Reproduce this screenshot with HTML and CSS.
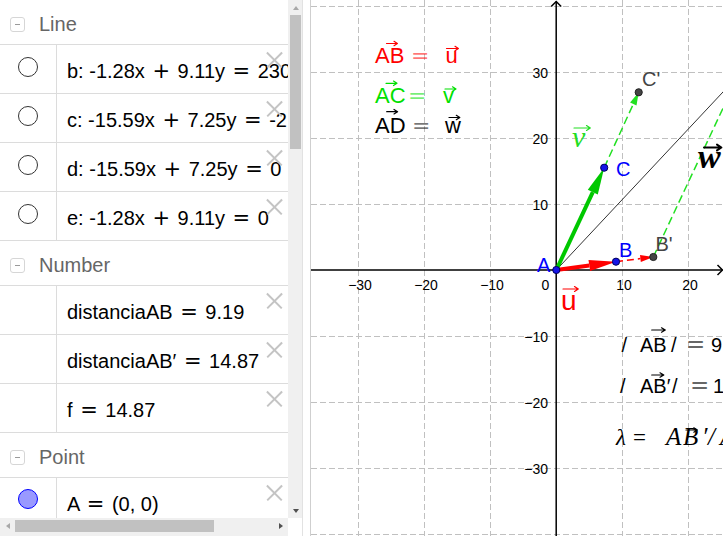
FILE: index.html
```html
<!DOCTYPE html>
<html>
<head>
<meta charset="utf-8">
<link rel="stylesheet" href="styles.css">
</head>
<body>
<div class="app">
  <div class="algebra">
    <div class="av-body">
      <div class="av-list">
        <div class="group-head"><span class="toggle"></span><span class="group-title">Line</span></div>
        <div class="item"><div class="marker"><span class="radio"></span></div><div class="formula">b: -1.28x <span class="op">+</span> 9.11y <span class="op">=</span> 230.29</div><span class="close"></span></div>
        <div class="item"><div class="marker"><span class="radio"></span></div><div class="formula">c: -15.59x <span class="op">+</span> 7.25y <span class="op">=</span> -214.57</div><span class="close"></span></div>
        <div class="item"><div class="marker"><span class="radio"></span></div><div class="formula">d: -15.59x <span class="op">+</span> 7.25y <span class="op">=</span> 0</div><span class="close"></span></div>
        <div class="item"><div class="marker"><span class="radio"></span></div><div class="formula">e: -1.28x <span class="op">+</span> 9.11y <span class="op">=</span> 0</div><span class="close"></span></div>
        <div class="group-head"><span class="toggle"></span><span class="group-title">Number</span></div>
        <div class="item"><div class="marker"></div><div class="formula">distanciaAB <span class="op">=</span> 9.19</div><span class="close"></span></div>
        <div class="item"><div class="marker"></div><div class="formula">distanciaAB′ <span class="op">=</span> 14.87</div><span class="close"></span></div>
        <div class="item"><div class="marker"></div><div class="formula">f <span class="op">=</span> 14.87</div><span class="close"></span></div>
        <div class="group-head"><span class="toggle"></span><span class="group-title">Point</span></div>
        <div class="item"><div class="marker marker-point"><span class="dot"></span></div><div class="formula">A <span class="op">=</span> (0, 0)</div><span class="close"></span></div>
      </div>
      <div class="vscroll">
        <div class="vs-btn"><span class="tri-up"></span></div>
        <div class="vs-thumb"></div>
        <div class="vs-space"></div>
        <div class="vs-btn"><span class="tri-down"></span></div>
      </div>
    </div>
    <div class="hscroll-row">
      <div class="hscroll">
        <div class="hs-btn"><span class="tri-left"></span></div>
        <div class="hs-thumb"></div>
        <div class="hs-space"></div>
        <div class="hs-btn"><span class="tri-right"></span></div>
      </div>
      <div class="corner"></div>
    </div>
  </div>
  <div class="splitter"></div>
  <div class="graphics">
    <svg class="canvas" width="412" height="536" viewBox="311 0 412 536">
      <g class="grid">
        <line x1="358.5" y1="0" x2="358.5" y2="536"/>
        <line x1="424.5" y1="0" x2="424.5" y2="536"/>
        <line x1="490.5" y1="0" x2="490.5" y2="536"/>
        <line x1="622.5" y1="0" x2="622.5" y2="536"/>
        <line x1="688.5" y1="0" x2="688.5" y2="536"/>
        <line x1="311" y1="6.5" x2="725" y2="6.5"/>
        <line x1="311" y1="72.5" x2="725" y2="72.5"/>
        <line x1="311" y1="138.5" x2="725" y2="138.5"/>
        <line x1="311" y1="204.5" x2="725" y2="204.5"/>
        <line x1="311" y1="336.5" x2="725" y2="336.5"/>
        <line x1="311" y1="402.5" x2="725" y2="402.5"/>
        <line x1="311" y1="468.5" x2="725" y2="468.5"/>
        <line x1="311" y1="534.5" x2="725" y2="534.5"/>
      </g>
      <g class="axes">
        <line x1="556.2" y1="1.5" x2="556.2" y2="536"/>
        <line x1="311" y1="270" x2="722.5" y2="270"/>
        <path d="M551.2 6.5 L556.2 1.5 L561.2 6.5"/>
        <path d="M717.5 265 L722.5 270 L717.5 275"/>
      </g>
      <g class="ticks">
        <text x="360" y="289.5" text-anchor="middle">−30</text>
        <text x="426" y="289.5" text-anchor="middle">−20</text>
        <text x="492" y="289.5" text-anchor="middle">−10</text>
        <text x="624" y="289.5" text-anchor="middle">10</text>
        <text x="690" y="289.5" text-anchor="middle">20</text>
        <text x="545.5" y="289.5" text-anchor="middle">0</text>
        <text x="548" y="78" text-anchor="end">30</text>
        <text x="548" y="144" text-anchor="end">20</text>
        <text x="548" y="210" text-anchor="end">10</text>
        <text x="548" y="342" text-anchor="end">−10</text>
        <text x="548" y="408" text-anchor="end">−20</text>
        <text x="548" y="474" text-anchor="end">−30</text>
      </g>
      <line class="thin-line" x1="556.3" y1="270" x2="730" y2="84.5"/>
      <line class="dash-green" x1="653.3" y1="257" x2="730" y2="93.2"/>
      <line class="dash-green" x1="604.2" y1="167.7" x2="633.3" y2="104.1"/>
      <polygon class="fill-green-l" points="638.7,92.3 636.5,105.6 630.1,102.6"/>
      <line class="dash-red" x1="616" y1="261.7" x2="640.4" y2="258.6"/>
      <polygon class="fill-red" points="653.3,257 640.8,262.1 640.0,255.1"/>
      <line class="vec-red" x1="556.3" y1="270" x2="589.3" y2="265.4"/>
      <polygon class="fill-red" points="616,261.7 590.1,270.9 588.5,260.0"/>
      <line class="vec-green" x1="556.3" y1="270" x2="592.8" y2="192.1"/>
      <polygon class="fill-green" points="604.2,167.7 597.8,194.4 587.8,189.8"/>
      <circle class="pt-free" cx="556.3" cy="270" r="3.6"/>
      <circle class="pt-free" cx="616" cy="261.7" r="3.6"/>
      <circle class="pt-free" cx="604.2" cy="167.7" r="3.6"/>
      <circle class="pt-dep" cx="653.3" cy="257" r="3.6"/>
      <circle class="pt-dep" cx="638.7" cy="92.3" r="3.6"/>

      <text class="lbl blue" x="537" y="272">A</text>
      <text class="lbl blue" x="619" y="257">B</text>
      <text class="lbl gray" x="655.5" y="251">B'</text>
      <text class="lbl blue" x="616" y="176">C</text>
      <text class="lbl gray" x="642" y="86">C'</text>

      <text class="ulbl" x="561" y="310">u</text>
      <path class="arr arr-red" d="M563 289 H578 M574.5 286.6 L578.3 289 L574.5 291.4"/>
      <text class="vlbl" x="572" y="147">v</text>
      <path class="arr arr-green" d="M574 128 H590 M586.5 125.6 L590.3 128 L586.5 130.4"/>
      <text class="wlbl" x="698" y="168">w</text>
      <path class="arr arr-black-b" d="M704 147.5 H721 M717 144.6 L721.4 147.5 L717 150.4"/>

      <text class="vt red" x="375" y="63.3">AB</text>
      <path class="arr arr-red" d="M386.5 43.5 H397 M394 41.3 L397.4 43.5 L394 45.7"/>
      <text class="veq red" x="411" y="63.3">=</text>
      <text class="vt red" x="445.5" y="63.3">u</text>
      <path class="arr arr-red" d="M446.5 48.5 H458 M455 46.3 L458.4 48.5 L455 50.7"/>

      <text class="vt green" x="375" y="102.7">AC</text>
      <path class="arr arr-green-t" d="M386 83.3 H396.7 M393.5 81.1 L397 83.3 L393.5 85.5"/>
      <text class="veq green" x="408" y="102.7">=</text>
      <text class="vt green" x="443" y="102.7">v</text>
      <path class="arr arr-green-t" d="M445 89 H455.7 M452.5 86.8 L456 89 L452.5 91.2"/>

      <text class="vt black" x="375" y="132.7">AD</text>
      <path class="arr arr-black" d="M386.7 111.7 H397.3 M394 109.5 L397.6 111.7 L394 113.9"/>
      <text class="veq black" x="412" y="132.7">=</text>
      <text class="vt black" x="445" y="132.7">w</text>
      <path class="arr arr-black" d="M449 117.5 H459.5 M456.3 115.3 L459.8 117.5 L456.3 119.7"/>

      <text class="mt" x="621.5" y="351.7">/</text>
      <text class="mt" x="640" y="351.7">AB</text>
      <path class="arr arr-black" d="M651.7 330 H665 M661.5 327.8 L665.3 330 L661.5 332.2"/>
      <text class="mt" x="671" y="351.7">/</text>
      <text class="meq" x="686" y="351.7">=</text>
      <text class="mt" x="711" y="351.7">9.19</text>

      <text class="mt" x="620" y="393">/</text>
      <text class="mt" x="640" y="393">AB′</text>
      <path class="arr arr-black" d="M651.7 375 H663.5 M660 372.8 L663.8 375 L660 377.2"/>
      <text class="mt" x="672" y="393">/</text>
      <text class="meq" x="690" y="393">=</text>
      <text class="mt" x="713" y="393">14.87</text>

      <text class="st" x="616" y="445">λ</text>
      <text class="seq" x="633" y="445">=</text>
      <text class="st st-wide" y="445"><tspan x="666">A</tspan><tspan x="683">B</tspan><tspan x="702">′</tspan><tspan x="708">/</tspan><tspan x="720">AB</tspan></text>
      <path class="arr arr-black" d="M686 430 H697 M693.8 427.8 L697.3 430 L693.8 432.2"/>
    </svg>
  </div>
</div>
</body>
</html>
```

FILE: styles.css
```css
* { box-sizing: border-box; }
html, body { margin: 0; padding: 0; }
body {
  width: 725px;
  height: 536px;
  overflow: hidden;
  background: #fff;
  font-family: "Liberation Sans", Arial, sans-serif;
}
.app { display: flex; width: 725px; height: 536px; }

/* ---------- algebra view ---------- */
.algebra { width: 302px; flex: none; display: flex; flex-direction: column; }
.av-body { display: flex; height: 518px; }
.av-list { width: 288px; height: 518px; overflow: hidden; }

.group-head {
  height: 45px;
  border-bottom: 1px solid #dcdcdc;
  display: flex;
  align-items: flex-start;
  padding-left: 10px;
}
.toggle {
  width: 15px;
  height: 15px;
  margin-top: 17px;
  border: 1px solid #d6d6d6;
  border-radius: 3px;
  display: flex;
  align-items: center;
  justify-content: center;
}
.toggle::before { content: ""; width: 5px; height: 1px; background: #9a9a9a; }
.group-title {
  margin-left: 14px;
  padding-top: 12px;
  line-height: 24px;
  font-size: 20px;
  color: #666;
}

.item {
  position: relative;
  height: 49px;
  border-bottom: 1px solid #dcdcdc;
  display: flex;
}
.marker {
  width: 57px;
  flex: none;
  border-right: 1px solid #dcdcdc;
  display: flex;
  justify-content: center;
  padding-top: 12px;
}
.marker-point { padding-top: 11px; }
.radio {
  width: 20px;
  height: 20px;
  border: 1.5px solid #333;
  border-radius: 50%;
}
.dot {
  width: 20px;
  height: 20px;
  border: 1.5px solid #0000ff;
  border-radius: 50%;
  background: #9999ff;
}
.formula {
  padding: 14px 0 0 10px;
  line-height: 24px;
  font-size: 20px;
  white-space: nowrap;
  color: #000;
}
.op {
  font-family: "DejaVu Sans", sans-serif;
  font-size: 21px;
  line-height: 0;
  margin: 0 2px;
}
.close {
  position: absolute;
  top: 7px;
  right: 6px;
  width: 15px;
  height: 15px;
}
.close::before, .close::after {
  content: "";
  position: absolute;
  left: -3px;
  top: 7px;
  width: 21px;
  height: 1.5px;
  background: #c4c4c4;
  transform: rotate(45deg);
}
.close::after { transform: rotate(-45deg); }

/* scrollbars */
.vscroll {
  width: 14px;
  height: 518px;
  background: #f0f0f0;
  display: flex;
  flex-direction: column;
  padding-left: 2px;
  padding-right: 1px;
}
.vs-btn { height: 15px; display: flex; align-items: center; justify-content: center; }
.vs-thumb { height: 134px; background: #c1c1c1; }
.vs-space { flex: 1; }
.tri-up { width: 0; height: 0; border-left: 3.5px solid transparent; border-right: 3.5px solid transparent; border-bottom: 4px solid #a8a8a8; }
.tri-down { width: 0; height: 0; border-left: 3.5px solid transparent; border-right: 3.5px solid transparent; border-top: 4px solid #505050; }
.tri-left { width: 0; height: 0; border-top: 3.5px solid transparent; border-bottom: 3.5px solid transparent; border-right: 4px solid #a8a8a8; }
.tri-right { width: 0; height: 0; border-top: 3.5px solid transparent; border-bottom: 3.5px solid transparent; border-left: 4px solid #505050; }

.hscroll-row { display: flex; height: 18px; }
.hscroll {
  width: 288px;
  background: #f0f0f0;
  display: flex;
  align-items: flex-start;
  padding-top: 2px;
}
.hs-btn { width: 15px; height: 12px; display: flex; align-items: center; justify-content: center; }
.hs-thumb { width: 199px; height: 12px; background: #c1c1c1; }
.hs-space { flex: 1; }
.corner { width: 14px; background: #fff; }

.splitter {
  width: 9px;
  flex: none;
  background: #fff;
  border-left: 1px solid #e2e2e2;
  border-right: 1px solid #cfcfcf;
}

/* ---------- graphics view ---------- */
.graphics { width: 414px; flex: none; background: #fff; }
.canvas { display: block; }
.grid line { stroke: #c0c0c0; stroke-width: 1; stroke-dasharray: 6 3; }
.axes line, .axes path { stroke: #000; stroke-width: 1.5; fill: none; }
.ticks text { font-family: "Liberation Sans", Arial, sans-serif; font-size: 14px; fill: #000; }

.thin-line { stroke: #333; stroke-width: 1; }
.dash-green { stroke: #22e022; stroke-width: 1.5; stroke-dasharray: 8 4; }
.dash-red { stroke: #ff0000; stroke-width: 1.5; stroke-dasharray: 7 4; }
.vec-red { stroke: #ff0000; stroke-width: 4; }
.vec-green { stroke: #00c800; stroke-width: 4; }
.fill-red { fill: #ff0000; }
.fill-green { fill: #00c800; }
.fill-green-l { fill: #22e022; }
.pt-free { fill: #1414e6; stroke: #00005a; stroke-width: 1; }
.pt-dep { fill: #444; stroke: #222; stroke-width: 1; }

.lbl { font-family: "Liberation Sans", Arial, sans-serif; font-size: 20px; }
.blue { fill: #0000ff; }
.gray { fill: #444; }
.red { fill: #ff0000; }
.green { fill: #00e000; }
.black { fill: #000; }

.ulbl { font-family: "Liberation Sans", Arial, sans-serif; font-size: 28px; fill: #ff0000; }
.vlbl { font-family: "Liberation Serif", "Times New Roman", serif; font-style: italic; font-size: 30px; fill: #22dd22; }
.wlbl { font-family: "Liberation Serif", "Times New Roman", serif; font-style: italic; font-weight: bold; font-size: 34px; fill: #000; }

.arr { fill: none; stroke-width: 1.2; stroke-linecap: round; stroke-linejoin: round; }
.arr-red { stroke: #ff0000; }
.arr-green { stroke: #22dd22; }
.arr-green-t { stroke: #00e000; }
.arr-black { stroke: #000; }
.arr-black-b { stroke: #000; stroke-width: 2; }

.vt { font-family: "Liberation Sans", Arial, sans-serif; font-size: 22px; }
.veq { font-family: "DejaVu Sans", sans-serif; font-size: 22px; fill-opacity: 0.55; }

.mt { font-family: "Liberation Sans", Arial, sans-serif; font-size: 20px; fill: #000; }
.meq { font-family: "DejaVu Sans", sans-serif; font-size: 23px; fill: #000; fill-opacity: 0.6; }
.st { font-family: "Liberation Serif", "Times New Roman", serif; font-style: italic; font-size: 23px; fill: #000; }
.st-wide { font-size: 25px; }
.seq { font-family: "Liberation Serif", "Times New Roman", serif; font-size: 23px; fill: #000; }
```
